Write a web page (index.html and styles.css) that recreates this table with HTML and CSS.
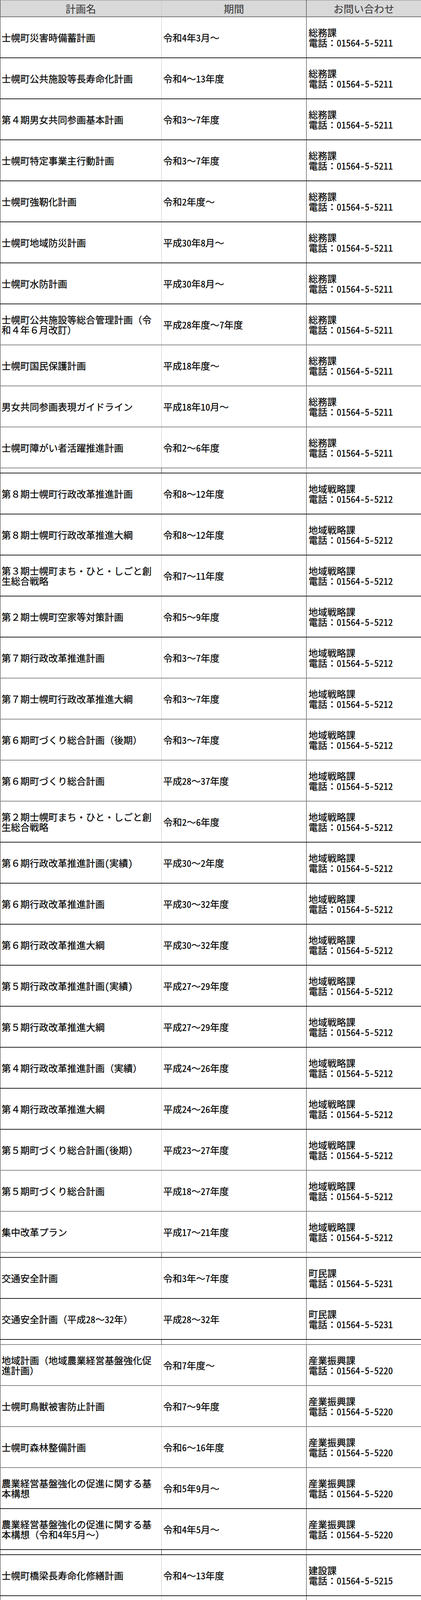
FILE: index.html
```html
<!DOCTYPE html>
<html lang="ja">
<head>
<meta charset="utf-8">
<title>計画一覧</title>
<link rel="stylesheet" href="styles.css">
</head>
<body>
<table class="plans">
<colgroup><col class="c-name"><col class="c-term"><col class="c-contact"></colgroup>
<thead>
<tr><th>計画名</th><th>期間</th><th>お問い合わせ</th></tr>
</thead>
<tbody>
<tr><td>士幌町災害時備蓄計画</td><td>令和4年3月～</td><td>総務課<br>電話：01564-5-5211</td></tr>
<tr><td>士幌町公共施設等長寿命化計画</td><td>令和4～13年度</td><td>総務課<br>電話：01564-5-5211</td></tr>
<tr><td>第４期男女共同参画基本計画</td><td>令和3～7年度</td><td>総務課<br>電話：01564-5-5211</td></tr>
<tr><td>士幌町特定事業主行動計画</td><td>令和3～7年度</td><td>総務課<br>電話：01564-5-5211</td></tr>
<tr><td>士幌町強靭化計画</td><td>令和2年度～</td><td>総務課<br>電話：01564-5-5211</td></tr>
<tr><td>士幌町地域防災計画</td><td>平成30年8月～</td><td>総務課<br>電話：01564-5-5211</td></tr>
<tr><td>士幌町水防計画</td><td>平成30年8月～</td><td>総務課<br>電話：01564-5-5211</td></tr>
<tr class="lb"><td>士幌町公共施設等総合管理計画（令和４年６月改訂）</td><td>平成28年度～7年度</td><td>総務課<br>電話：01564-5-5211</td></tr>
<tr class="lb"><td>士幌町国民保護計画</td><td>平成18年度～</td><td>総務課<br>電話：01564-5-5211</td></tr>
<tr class="lb"><td>男女共同参画表現ガイドライン</td><td>平成18年10月～</td><td>総務課<br>電話：01564-5-5211</td></tr>
<tr class="lb"><td>士幌町障がい者活躍推進計画</td><td>令和2～6年度</td><td>総務課<br>電話：01564-5-5211</td></tr>
<tr class="gap"><td></td><td></td><td></td></tr>
<tr><td>第８期士幌町行政改革推進計画</td><td>令和8～12年度</td><td>地域戦略課<br>電話：01564-5-5212</td></tr>
<tr><td>第８期士幌町行政改革推進大綱</td><td>令和8～12年度</td><td>地域戦略課<br>電話：01564-5-5212</td></tr>
<tr><td>第３期士幌町まち・ひと・しごと創生総合戦略</td><td>令和7～11年度</td><td>地域戦略課<br>電話：01564-5-5212</td></tr>
<tr><td>第２期士幌町空家等対策計画</td><td>令和5～9年度</td><td>地域戦略課<br>電話：01564-5-5212</td></tr>
<tr class="lb"><td>第７期行政改革推進計画</td><td>令和3～7年度</td><td>地域戦略課<br>電話：01564-5-5212</td></tr>
<tr class="lb"><td>第７期士幌町行政改革推進大綱</td><td>令和3～7年度</td><td>地域戦略課<br>電話：01564-5-5212</td></tr>
<tr class="lb"><td>第６期町づくり総合計画（後期）</td><td>令和3～7年度</td><td>地域戦略課<br>電話：01564-5-5212</td></tr>
<tr class="lb"><td>第６期町づくり総合計画</td><td>平成28～37年度</td><td>地域戦略課<br>電話：01564-5-5212</td></tr>
<tr><td>第２期士幌町まち・ひと・しごと創生総合戦略</td><td>令和2～6年度</td><td>地域戦略課<br>電話：01564-5-5212</td></tr>
<tr><td>第６期行政改革推進計画(実績)</td><td>平成30～2年度</td><td>地域戦略課<br>電話：01564-5-5212</td></tr>
<tr><td>第６期行政改革推進計画</td><td>平成30～32年度</td><td>地域戦略課<br>電話：01564-5-5212</td></tr>
<tr><td>第６期行政改革推進大綱</td><td>平成30～32年度</td><td>地域戦略課<br>電話：01564-5-5212</td></tr>
<tr><td>第５期行政改革推進計画(実績)</td><td>平成27～29年度</td><td>地域戦略課<br>電話：01564-5-5212</td></tr>
<tr><td>第５期行政改革推進大綱</td><td>平成27～29年度</td><td>地域戦略課<br>電話：01564-5-5212</td></tr>
<tr><td>第４期行政改革推進計画（実績）</td><td>平成24～26年度</td><td>地域戦略課<br>電話：01564-5-5212</td></tr>
<tr><td>第４期行政改革推進大綱</td><td>平成24～26年度</td><td>地域戦略課<br>電話：01564-5-5212</td></tr>
<tr class="lb"><td>第５期町づくり総合計画(後期)</td><td>平成23～27年度</td><td>地域戦略課<br>電話：01564-5-5212</td></tr>
<tr class="lb"><td>第５期町づくり総合計画</td><td>平成18～27年度</td><td>地域戦略課<br>電話：01564-5-5212</td></tr>
<tr class="lb"><td>集中改革プラン</td><td>平成17～21年度</td><td>地域戦略課<br>電話：01564-5-5212</td></tr>
<tr class="gap"><td></td><td></td><td></td></tr>
<tr><td>交通安全計画</td><td>令和3年～7年度</td><td>町民課<br>電話：01564-5-5231</td></tr>
<tr><td>交通安全計画（平成28～32年）</td><td>平成28～32年</td><td>町民課<br>電話：01564-5-5231</td></tr>
<tr class="gap lb"><td></td><td></td><td></td></tr>
<tr class="lb"><td>地域計画（地域農業経営基盤強化促進計画）</td><td>令和7年度～</td><td>産業振興課<br>電話：01564-5-5220</td></tr>
<tr class="lb"><td>士幌町鳥獣被害防止計画</td><td>令和7～9年度</td><td>産業振興課<br>電話：01564-5-5220</td></tr>
<tr class="lb"><td>士幌町森林整備計画</td><td>令和6～16年度</td><td>産業振興課<br>電話：01564-5-5220</td></tr>
<tr><td>農業経営基盤強化の促進に関する基本構想</td><td>令和5年9月～</td><td>産業振興課<br>電話：01564-5-5220</td></tr>
<tr><td>農業経営基盤強化の促進に関する基本構想（令和4年5月～）</td><td>令和4年5月～</td><td>産業振興課<br>電話：01564-5-5220</td></tr>
<tr class="gap"><td></td><td></td><td></td></tr>
<tr><td>士幌町橋梁長寿命化修繕計画</td><td>令和4～13年度</td><td>建設課<br>電話：01564-5-5215</td></tr>
<tr><td>第２期士幌町住生活基本計画</td><td>令和3～13年度</td><td>建設課<br>電話：01564-5-5216</td></tr>
<tr class="lb"><td>第２期公営住宅等長寿命化計画</td><td>令和3～13年度</td><td>建設課<br>電話：01564-5-5216</td></tr>
<tr class="lb"><td>士幌町舗装長寿命化修繕計画</td><td>令和8～17年度</td><td>建設課<br>電話：01564-5-5215</td></tr>
<tr class="gap"><td></td><td></td><td></td></tr>
<tr><td>士幌町高齢者保健福祉計画・第９期介護保険事業計画</td><td>令和6～8年度</td><td>保健福祉課<br>電話：01564-5-2006</td></tr>
<tr><td>士幌町障がい者計画・第７期障がい福祉計画・第３期障がい児福祉計画</td><td>令和6～8年度</td><td>保健福祉課<br>電話：01564-5-2006</td></tr>
<tr><td>士幌町国民健康保険第3期データヘルス計画及び第4期特定健康診査等実施計画</td><td>令和6年3月～</td><td>保健福祉課<br>電話：01564-5-2006</td></tr>
<tr><td>第４期士幌町地域福祉計画</td><td>令和3～7年度</td><td>保健福祉課<br>電話：01564-5-2006</td></tr>
<tr><td>士幌町新型インフルエンザ等対策行動計画</td><td>平成26年2月～</td><td>保健福祉課<br>電話：01564-5-2108</td></tr>
<tr><td>第２期保健事業実施計画（第2期データヘルス計画）</td><td>平成30～35年度</td><td>保健福祉課<br>電話：01564-5-2108</td></tr>
<tr class="gap lb"><td></td><td></td><td></td></tr>
<tr class="lb"><td>第３期士幌町子ども・子育て 支援事業計画</td><td>令和7～11年度</td><td>幼児教育課<br>電話：01564-5-2364</td></tr>
<tr><td>第２期士幌町子ども・子育て 支援事業計画</td><td>令和2～6年度</td><td>幼児教育課<br>電話：01564-5-2364</td></tr>
<tr class="gap"><td></td><td></td><td></td></tr>
<tr class="lb"><td>士幌町社会教育中期計画</td><td>令和4～8年度</td><td>教育委員会 教育課<br>電話：01564-5-4733</td></tr>
<tr><td>士幌町教育委員会障がい者活躍推進計画</td><td>令和2～6年度</td><td>教育委員会 教育課<br>電話：01564-5-4732</td></tr>
<tr class="lb"><td>士幌町教育大綱</td><td>令和3～7年度</td><td>教育委員会 教育課<br>電話：01564-5-4732</td></tr>
<tr class="lb"><td>士幌町教育大綱（平成27～32年度）</td><td>平成27～32年度</td><td>教育委員会 教育課<br>電話：01564-5-4732</td></tr>
<tr class="lb"><td>士幌町教育振興基本計画</td><td>令和3～7年度</td><td>教育委員会 教育課<br>電話：01564-5-4732</td></tr>
<tr class="lb"><td>士幌町教育振興基本計画（平成29～32年度）</td><td>平成29～32年度</td><td>教育委員会 教育課<br>電話：01564-5-4732</td></tr>
<tr><td>士幌町子どもの読書活動推進計画（第3期）</td><td>令和3年～7年度</td><td>教育委員会 教育課<br>電話：01564-5-4733</td></tr>
<tr><td>士幌町子どもの読書活動推進計画（第2期）</td><td>平成28～32年度</td><td>教育委員会 教育課<br>電話：01564-5-4733</td></tr>
<tr class="gap"><td></td><td></td><td></td></tr>
<tr><td>士幌町国民健康保険病院改革プラン</td><td>平成29～32年度</td><td>国保病院<br>電話：01564-5-2106</td></tr>
</tbody>
</table>
</body>
</html>
```

FILE: styles.css
```css
html, body {
  margin: 0;
  padding: 0;
  background: #ffffff;
}

body {
  font-family: "Noto Sans Mono CJK JP", "Noto Sans CJK JP", sans-serif;
  color: #000000;
}

.plans {
  width: 1078px;
  border-collapse: collapse;
  table-layout: fixed;
  border-left: 1px solid #222222;
}

.c-name { width: 413px; }
.c-term { width: 371px; }
.c-contact { width: 294px; }

.plans th {
  height: 41px;
  padding: 0;
  background: #d9d9d9;
  color: #333333;
  font-size: 26px;
  font-weight: 400;
  line-height: 30px;
  text-align: center;
  vertical-align: middle;
  border-top: 1px solid #888888;
  border-bottom: 2px solid #777777;
}

.plans td {
  height: 103px;
  padding: 0 6px 0 3px;
  font-size: 24px;
  line-height: 26px;
  vertical-align: middle;
  text-align: left;
  border-bottom: 2px solid #222222;
  word-break: normal;
  line-break: strict;
  -webkit-text-stroke: 0.3px #000000;
}

.plans td:nth-child(2) {
  padding-left: 4px;
}

.plans td:nth-child(3) {
  padding-left: 5px;
}

.plans th:nth-child(1),
.plans td:nth-child(1) {
  border-right: 1px solid #c4c4c4;
}

.plans th:nth-child(2),
.plans td:nth-child(2) {
  border-right: 1px solid #222222;
}

.plans tr.lb td {
  border-bottom-color: #8a8a8a;
}

.plans tr.gap td {
  height: 11px;
  padding: 0;
  line-height: 0;
  font-size: 0;
}

.plans tr.gap td:nth-child(1) {
  border-right-color: #222222;
}

.plans tr.gap td:nth-child(2) {
  border-right-color: #9a9a9a;
}

.plans tr.gap td:nth-child(3) {
  border-right: 1px solid #222222;
}
```
